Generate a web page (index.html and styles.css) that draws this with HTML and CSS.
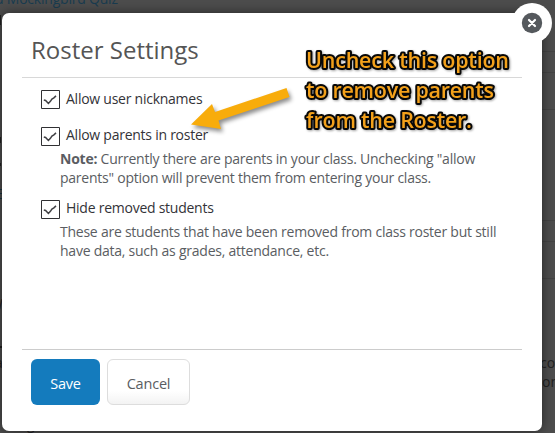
FILE: index.html
```html
<!DOCTYPE html>
<html lang="en">
<head>
<meta charset="utf-8">
<title>Roster Settings</title>
<link rel="stylesheet" href="styles.css">
</head>
<body>
<div class="backdrop" aria-hidden="true">
  <svg width="555" height="433" viewBox="0 0 555 433">
    <path class="rule" d="M540 51.5H555M540 72.5H555M540 109.5H555M540 220.5H555M540 241.5H555M540 278.5H555"/>
    <path class="link-lines" d="M0 189.5H2M0 193.5H2M0 198.5H2"/>
    <text class="quiz" x="-5" y="4" textLength="123">d Mockingbird Quiz</text>
    <text class="page-text" x="540" y="368">con</text>
    <text class="page-text" x="542" y="387">ont</text>
    <text class="page-text" x="-5" y="368">a</text>
    <text class="page-text" x="-10" y="309">W</text>
    <text class="page-text" x="27" y="429">g</text>
    <path class="mark" d="M0 15V25M0 137V143M0 163V166M0 347H2"/>
  </svg>
</div>
<main class="modal">
  <h1><span class="title">Roster Settings</span></h1>
  <form class="options">
    <div class="option">
      <div class="row"><svg class="box" viewBox="0 0 19 19"><path class="frame" d="M.5.5h18v18H.5z"/><path class="tick" d="M2.8 10l1.8.5 2.8 3 2-2.2 1.5-2.2 2-1.2 2.1-2"/></svg><span class="label nick">Allow user nicknames</span></div>
    </div>
    <div class="option">
      <div class="row"><svg class="box" viewBox="0 0 19 19"><path class="frame" d="M.5.5h18v18H.5z"/><path class="tick" d="M2.8 10l1.8.5 2.8 3 2-2.2 1.5-2.2 2-1.2 2.1-2"/></svg><span class="label">Allow parents in roster</span></div>
      <p><b>Note:</b> Currently there are parents in your class. Unchecking "allow<br>parents" option will prevent them from entering your class.</p>
    </div>
    <div class="option">
      <div class="row"><svg class="box" viewBox="0 0 19 19"><path class="frame" d="M.5.5h18v18H.5z"/><path class="tick" d="M2.8 10l1.8.5 2.8 3 2-2.2 1.5-2.2 2-1.2 2.1-2"/></svg><span class="label">Hide removed students</span></div>
      <p>These are students that have been removed from class roster but still<br>have data, such as grades, attendance, etc.</p>
    </div>
  </form>
  <footer><button class="save">Save</button><button class="cancel">Cancel</button></footer>
</main>
<svg class="close" viewBox="0 0 40 40"><circle cx="20" cy="20" r="20" fill="#fff"/><circle cx="20" cy="20" r="10.2" fill="#55595d"/><path d="M17 17l6 6M23 17l-6 6"/></svg>
<svg class="callout" width="555" height="433" viewBox="0 0 555 433">
  <path class="arrow" d="M191 124.5L212 104L215 112L286.5 88L289.5 97L218.5 120.5L221 129Z"/>
  <g class="advice">
    <text x="306" y="67.5" textLength="203">Uncheck this option</text>
    <text x="306" y="97.5" textLength="188">to remove parents</text>
    <text x="306" y="127.5" textLength="166">from the Roster.</text>
  </g>
</svg>
</body>
</html>
```
FILE: styles.css
```css
* { box-sizing: border-box; }
body { margin: 0; width: 555px; height: 433px; overflow: hidden; background: #4d4d4d; font: 14px/19px "Open Sans", sans-serif; }
.backdrop { position: absolute; inset: 0; }
.backdrop svg, .callout { display: block; }
.rule { stroke: #444; fill: none; }
.link-lines { stroke: #193442; }
.mark { stroke: #202020; stroke-width: 2; }
.quiz { fill: #193c50; font-size: 14px; }
.page-text { fill: #222; font-size: 14px; }
.modal { position: relative; display: flex; flex-direction: column; width: 540px; height: 418px; margin: 13px 0 0 2px; padding: 0 20px; background: #fff; border-radius: 7px; box-shadow: 0 0 12px rgba(0,0,0,.5); }
h1 { height: 65px; margin: 0; padding: 20px 0 0 9px; border-bottom: 1px solid #d8d8d8; font-size: 24px; line-height: 34px; font-weight: 400; color: #555; }
.options { flex: 1; padding: 12px 0 0 19px; }
.row { display: flex; height: 19px; gap: 6px; }
.option { height: 37px; }
.option + .option { height: 73px; }
.box { width: 19px; height: 19px; }
.frame { fill: none; stroke: #303033; }
.tick { fill: none; stroke: #404044; stroke-width: 1.5; }
.label { color: #333338; letter-spacing: -.25px; margin-top: -2px; white-space: nowrap; }
.nick { margin-top: -1px; }
p { margin: 3px 0 0 19px; color: #5a5d62; letter-spacing: -.24px; white-space: nowrap; }
footer { display: flex; gap: 7px; height: 82px; padding: 9px 0 0 9px; border-top: 1px solid #ccc; }
button { height: 46px; padding: 3px 0 0; border-radius: 6px; font: 14.5px "Open Sans", sans-serif; letter-spacing: -.2px; }
.save { width: 69px; border: 0; background: #147bbd; color: #fff; }
.cancel { width: 83px; border: 1px solid #ddd; background: linear-gradient(#fff 70%, #f3f3f3); color: #5a5d62; }
.close { position: absolute; left: 511.5px; top: 3px; width: 40px; height: 40px; }
.close path { stroke: #fff; stroke-width: 2.2; stroke-linecap: round; }
.callout { position: absolute; left: 0; top: 0; pointer-events: none; }
.arrow { fill: #f8ac0b; filter: drop-shadow(2px 3px 2px rgba(0,0,0,.45)); }
.advice { font-size: 21.5px; font-weight: 600; fill: #f3a11b; stroke: #080808; stroke-width: 4px; stroke-linejoin: round; paint-order: stroke; filter: drop-shadow(1px 1px 1px rgba(0,0,0,.35)); }
```
